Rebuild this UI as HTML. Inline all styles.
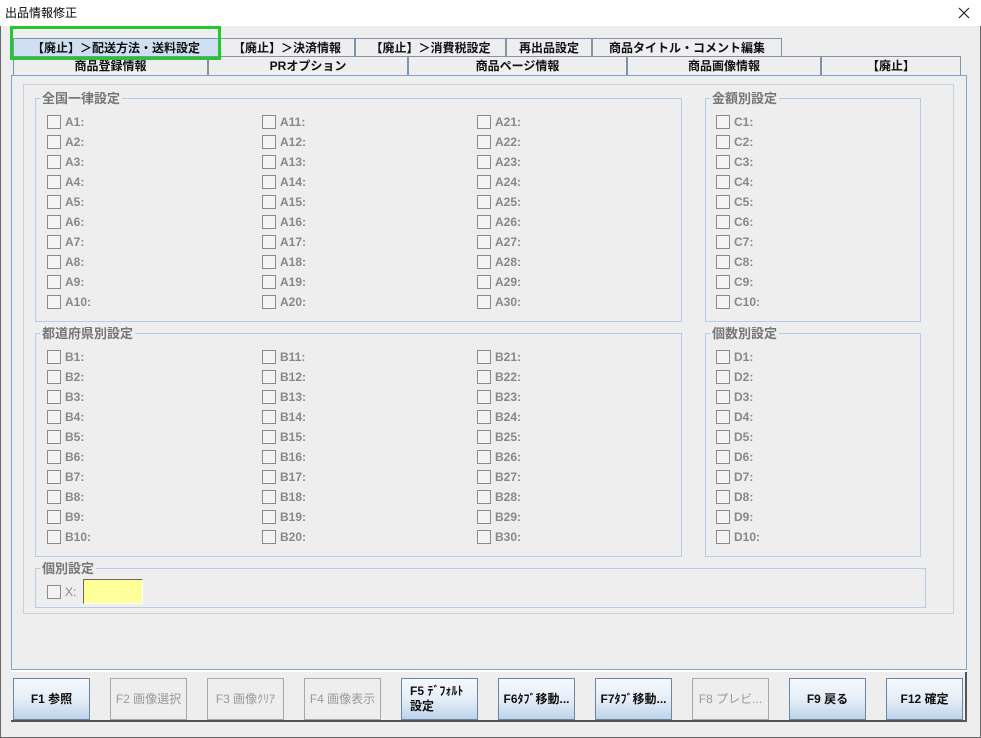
<!DOCTYPE html><html><head><meta charset="utf-8"><style>
*{box-sizing:border-box;margin:0;padding:0}
body{width:981px;height:738px;background:#f0f0f0;font-family:"Liberation Sans","Noto Sans CJK JP",sans-serif;position:relative;overflow:hidden}
.a{position:absolute}
#win{left:0;top:0;width:981px;height:738px;border:1px solid #6a6a6a;border-top:none;background:#eeeeee}
#title{left:0;top:0;width:981px;height:26px;background:#fff;font-size:12px;color:#000;padding:4px 0 0 5px}
.tab{position:absolute;height:19px;border:1px solid #8094a8;border-bottom:none;background:#eeeeee;font-size:12px;font-weight:bold;text-align:center;line-height:18px;color:#111;white-space:nowrap;overflow:hidden}
.grp{position:absolute;border:1px solid #b8cde2}
.gt{position:absolute;top:-8px;left:4px;background:#eeeeee;padding:0 2px;font-size:13px;color:#777;font-weight:bold;line-height:15px}
.col{position:absolute;width:150px}
.r{height:20px;position:relative;font-size:12px;font-weight:bold;color:#888;line-height:14px}
.r i{position:absolute;left:0;top:0;width:14px;height:14px;border:1px solid #8a8a8a;background:#f3f3f3}
.r span{position:absolute;left:18px;top:0}
.btn{position:absolute;top:678px;width:77px;height:42px;border:1px solid #6a86a0;background:linear-gradient(#f6f9fc,#e4eef7 50%,#bed4ea);font-size:12px;font-weight:bold;text-align:center;line-height:40px;color:#111;white-space:nowrap}
.btn.d{border:1px solid #a8a8a8;background:#eeeeee;color:#999;font-weight:normal}
</style></head><body>
<div id="win" class="a"></div>
<div id="title" class="a">出品情報修正</div>
<svg class="a" style="left:958px;top:7px" width="12" height="12"><path d="M1 1L11 11M11 1L1 11" stroke="#222" stroke-width="1.2"/></svg>
<div class="tab" style="left:13px;top:38px;width:206px;background:#cfe0f2">【廃止】＞配送方法・送料設定</div>
<div class="tab" style="left:219px;top:38px;width:136px">【廃止】＞決済情報</div>
<div class="tab" style="left:355px;top:38px;width:151px">【廃止】＞消費税設定</div>
<div class="tab" style="left:506px;top:38px;width:86px">再出品設定</div>
<div class="tab" style="left:592px;top:38px;width:190px">商品タイトル・コメント編集</div>
<div class="tab" style="left:13px;top:56px;width:195px">商品登録情報</div>
<div class="tab" style="left:208px;top:56px;width:200px">PRオプション</div>
<div class="tab" style="left:408px;top:56px;width:219px">商品ページ情報</div>
<div class="tab" style="left:627px;top:56px;width:194px">商品画像情報</div>
<div class="tab" style="left:821px;top:56px;width:140px">【廃止】</div>
<div class="a" style="left:10px;top:26px;width:211px;height:34px;border:3px solid #22c92e"></div>
<div class="a" style="left:11px;top:75px;width:956px;height:595px;border:1px solid #7ea6cc"></div>
<div class="a" style="left:23px;top:84px;width:931px;height:530px;border:1px solid #c0d2e4"></div>

<div class="grp" style="left:35px;top:98px;width:647px;height:224px"><div class="gt">全国一律設定</div></div>
<div class="grp" style="left:705px;top:98px;width:216px;height:224px"><div class="gt">金額別設定</div></div>
<div class="grp" style="left:35px;top:333px;width:647px;height:224px"><div class="gt">都道府県別設定</div></div>
<div class="grp" style="left:705px;top:333px;width:216px;height:224px"><div class="gt">個数別設定</div></div>
<div class="grp" style="left:35px;top:568px;width:891px;height:40px"><div class="gt">個別設定</div></div>

<div class="col" style="left:47px;top:115px"><div class="r"><i></i><span>A1:</span></div><div class="r"><i></i><span>A2:</span></div><div class="r"><i></i><span>A3:</span></div><div class="r"><i></i><span>A4:</span></div><div class="r"><i></i><span>A5:</span></div><div class="r"><i></i><span>A6:</span></div><div class="r"><i></i><span>A7:</span></div><div class="r"><i></i><span>A8:</span></div><div class="r"><i></i><span>A9:</span></div><div class="r"><i></i><span>A10:</span></div></div>
<div class="col" style="left:262px;top:115px"><div class="r"><i></i><span>A11:</span></div><div class="r"><i></i><span>A12:</span></div><div class="r"><i></i><span>A13:</span></div><div class="r"><i></i><span>A14:</span></div><div class="r"><i></i><span>A15:</span></div><div class="r"><i></i><span>A16:</span></div><div class="r"><i></i><span>A17:</span></div><div class="r"><i></i><span>A18:</span></div><div class="r"><i></i><span>A19:</span></div><div class="r"><i></i><span>A20:</span></div></div>
<div class="col" style="left:477px;top:115px"><div class="r"><i></i><span>A21:</span></div><div class="r"><i></i><span>A22:</span></div><div class="r"><i></i><span>A23:</span></div><div class="r"><i></i><span>A24:</span></div><div class="r"><i></i><span>A25:</span></div><div class="r"><i></i><span>A26:</span></div><div class="r"><i></i><span>A27:</span></div><div class="r"><i></i><span>A28:</span></div><div class="r"><i></i><span>A29:</span></div><div class="r"><i></i><span>A30:</span></div></div>
<div class="col" style="left:716px;top:115px"><div class="r"><i></i><span>C1:</span></div><div class="r"><i></i><span>C2:</span></div><div class="r"><i></i><span>C3:</span></div><div class="r"><i></i><span>C4:</span></div><div class="r"><i></i><span>C5:</span></div><div class="r"><i></i><span>C6:</span></div><div class="r"><i></i><span>C7:</span></div><div class="r"><i></i><span>C8:</span></div><div class="r"><i></i><span>C9:</span></div><div class="r"><i></i><span>C10:</span></div></div>
<div class="col" style="left:47px;top:350px"><div class="r"><i></i><span>B1:</span></div><div class="r"><i></i><span>B2:</span></div><div class="r"><i></i><span>B3:</span></div><div class="r"><i></i><span>B4:</span></div><div class="r"><i></i><span>B5:</span></div><div class="r"><i></i><span>B6:</span></div><div class="r"><i></i><span>B7:</span></div><div class="r"><i></i><span>B8:</span></div><div class="r"><i></i><span>B9:</span></div><div class="r"><i></i><span>B10:</span></div></div>
<div class="col" style="left:262px;top:350px"><div class="r"><i></i><span>B11:</span></div><div class="r"><i></i><span>B12:</span></div><div class="r"><i></i><span>B13:</span></div><div class="r"><i></i><span>B14:</span></div><div class="r"><i></i><span>B15:</span></div><div class="r"><i></i><span>B16:</span></div><div class="r"><i></i><span>B17:</span></div><div class="r"><i></i><span>B18:</span></div><div class="r"><i></i><span>B19:</span></div><div class="r"><i></i><span>B20:</span></div></div>
<div class="col" style="left:477px;top:350px"><div class="r"><i></i><span>B21:</span></div><div class="r"><i></i><span>B22:</span></div><div class="r"><i></i><span>B23:</span></div><div class="r"><i></i><span>B24:</span></div><div class="r"><i></i><span>B25:</span></div><div class="r"><i></i><span>B26:</span></div><div class="r"><i></i><span>B27:</span></div><div class="r"><i></i><span>B28:</span></div><div class="r"><i></i><span>B29:</span></div><div class="r"><i></i><span>B30:</span></div></div>
<div class="col" style="left:716px;top:350px"><div class="r"><i></i><span>D1:</span></div><div class="r"><i></i><span>D2:</span></div><div class="r"><i></i><span>D3:</span></div><div class="r"><i></i><span>D4:</span></div><div class="r"><i></i><span>D5:</span></div><div class="r"><i></i><span>D6:</span></div><div class="r"><i></i><span>D7:</span></div><div class="r"><i></i><span>D8:</span></div><div class="r"><i></i><span>D9:</span></div><div class="r"><i></i><span>D10:</span></div></div>
<div class="col" style="left:47px;top:585px"><div class="r"><i></i><span style="font-weight:normal">X:</span></div></div>
<div class="a" style="left:83px;top:579px;width:60px;height:25px;background:#ffff99;border-top:1px solid #666;border-left:1px solid #666;border-right:1px solid #fff;border-bottom:1px solid #fff"></div>

<div class="a" style="left:11px;top:670px;width:956px;height:2px;background:#fff"></div>
<div class="a" style="left:11px;top:720px;width:956px;height:2px;background:#555"></div>
<div class="a" style="left:965px;top:672px;width:2px;height:50px;background:#555"></div>

<div class="btn" style="left:13px">F1 参照</div>
<div class="btn d" style="left:110px">F2 画像選択</div>
<div class="btn d" style="left:207px">F3 画像ｸﾘｱ</div>
<div class="btn d" style="left:304px">F4 画像表示</div>
<div class="btn" style="left:401px;line-height:15px;text-align:left;padding:5px 0 0 8px">F5 ﾃﾞﾌｫﾙﾄ<br>設定</div>
<div class="btn" style="left:498px">F6ﾀﾌﾞ移動...</div>
<div class="btn" style="left:595px">F7ﾀﾌﾞ移動...</div>
<div class="btn d" style="left:692px">F8 プレビ...</div>
<div class="btn" style="left:789px">F9 戻る</div>
<div class="btn" style="left:886px">F12 確定</div>
</body></html>
